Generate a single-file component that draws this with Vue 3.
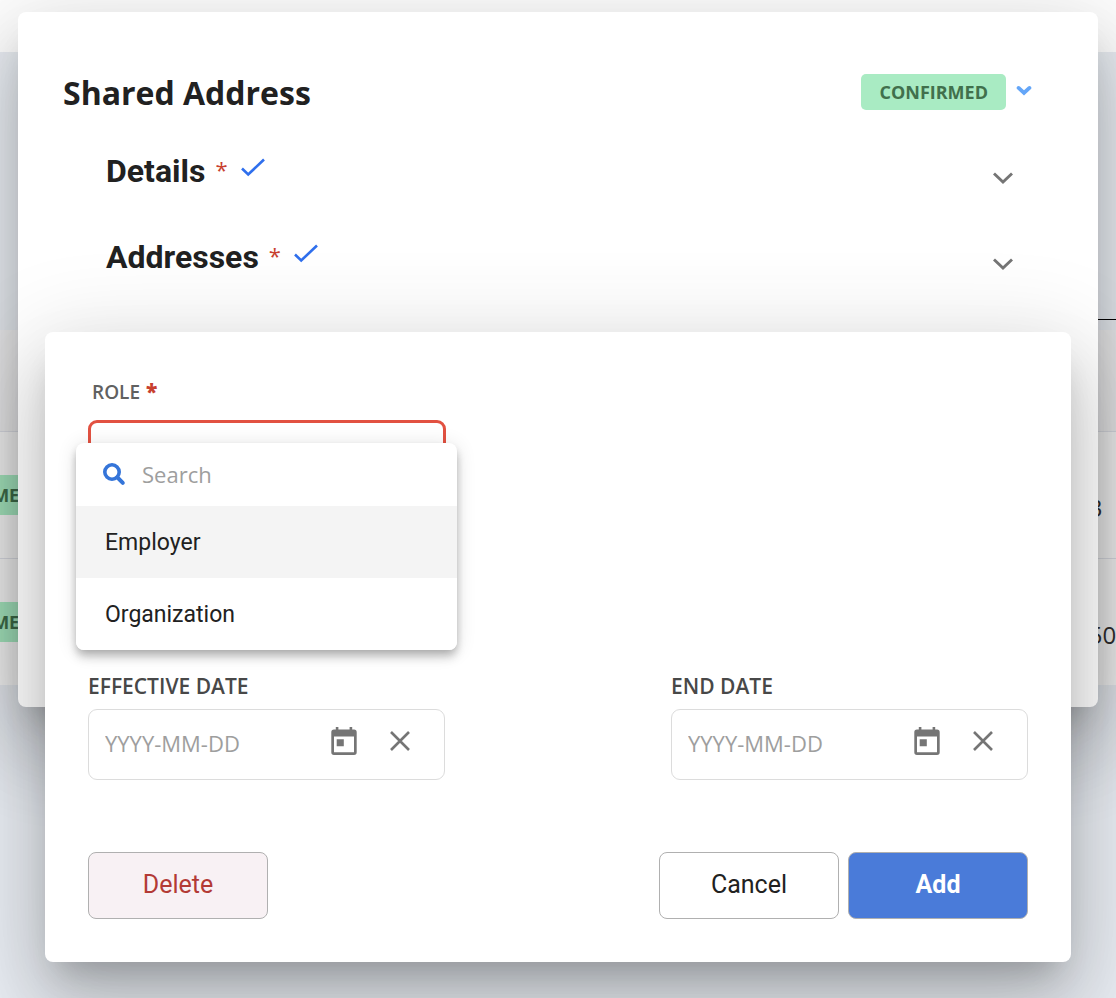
<script setup>
import { ref } from 'vue'

const roles = ['Employer', 'Organization']
const active = ref('Employer')
const search = ref('')
const dates = ref([
  { id: 'effective', label: 'EFFECTIVE DATE', value: '' },
  { id: 'end', label: 'END DATE', value: '' },
])
const sections = [{ title: 'Details' }, { title: 'Addresses' }]
const rows = [
  { status: 'CONFIRMED', value: '13' },
  { status: 'CONFIRMED', value: '250' },
]
</script>

<template>
  <div class="page">
    <header class="topbar"></header>
    <main class="backdrop">
      <div class="rule"></div>
      <table class="records">
        <thead>
          <tr><th></th><th></th></tr>
        </thead>
        <tbody>
          <tr v-for="row in rows" :key="row.value">
            <td><span class="tag">{{ row.status }}</span></td>
            <td class="amount">{{ row.value }}</td>
          </tr>
        </tbody>
      </table>
    </main>

    <section class="dialog parent" aria-label="Shared Address">
      <div class="titlebar">
        <h1>Shared Address</h1>
        <div class="status">
          <span class="badge">CONFIRMED</span>
          <button class="icon-btn" aria-label="Change status">
            <svg width="16" height="16" viewBox="0 0 16 16"><path d="M2.6 3.9 8 9 13.4 3.9" fill="none" stroke="#64a6f8" stroke-width="3.8" stroke-linecap="round" /></svg>
          </button>
        </div>
      </div>
      <div v-for="s in sections" :key="s.title" class="section">
        <h2>{{ s.title }}</h2>
        <span class="star">*</span>
        <svg class="check" width="26" height="20" viewBox="0 0 26 20"><path d="M2 11.5 8.2 17.5 24 2.5" fill="none" stroke="#2f6fed" stroke-width="2.6" /></svg>
        <button class="icon-btn expand" :aria-label="'Expand ' + s.title">
          <svg width="22" height="14" viewBox="0 0 22 14"><path d="M2 2.5 11 11 20 2.5" fill="none" stroke="#757575" stroke-width="2.9" /></svg>
        </button>
      </div>
    </section>

    <section class="dialog child" aria-label="Add role">
      <div class="role">
        <label id="role-label" for="role">ROLE <b>*</b></label>
        <button id="role" class="select" aria-haspopup="listbox" aria-labelledby="role-label"></button>
        <div class="panel">
          <label class="search">
            <svg width="24" height="24" viewBox="0 0 24 24" aria-hidden="true"><circle cx="10" cy="10" r="7.2" fill="none" stroke="#3575d9" stroke-width="3.6" /><path d="M15.5 15.5 20.8 20.8" stroke="#3575d9" stroke-width="4" stroke-linecap="round" /></svg>
            <input v-model="search" type="text" placeholder="Search" aria-label="Search" />
          </label>
          <button v-for="r in roles" :key="r" class="option" :class="{ active: r === active }" @click="active = r">{{ r }}</button>
        </div>
      </div>

      <div class="dates">
        <div v-for="d in dates" :key="d.id" class="field">
          <label :for="d.id">{{ d.label }}</label>
          <div class="box">
            <input :id="d.id" v-model="d.value" type="text" placeholder="YYYY-MM-DD" />
            <button class="icon-btn" aria-label="Open calendar">
              <svg width="28" height="30" viewBox="0 0 28 30"><path fill="#757575" fill-rule="evenodd" d="M4 3.5H5.8V1H8.4V3.5H19.6V1H22.2V3.5H24A2.7 2.7 0 0 1 26.7 6.2V26.3A2.7 2.7 0 0 1 24 29H4A2.7 2.7 0 0 1 1.3 26.3V6.2A2.7 2.7 0 0 1 4 3.5ZM4 10.4V26.3H24V10.4ZM6.7 13.3H13.8V20.3H6.7Z" /></svg>
            </button>
            <button class="icon-btn" aria-label="Clear date" @click="d.value = ''">
              <svg width="20" height="20" viewBox="0 0 20 20"><path d="M1 1 19 19M19 1 1 19" fill="none" stroke="#757575" stroke-width="2.6" /></svg>
            </button>
          </div>
        </div>
      </div>

      <div class="actions">
        <button class="btn delete">Delete</button>
        <button class="btn">Cancel</button>
        <button class="btn primary">Add</button>
      </div>
    </section>
  </div>
</template>

<style>
body { margin: 0; }
</style>

<style scoped>
* { box-sizing: border-box; }
.page {
  position: relative;
  min-height: 100vh;
  overflow: hidden;
  background: #e9edf3;
  color: #212121;
  font-family: "Open Sans", "Noto Sans", sans-serif;
}
button, input { font: inherit; color: inherit; }
svg { display: block; }
.topbar { height: 52px; background: #fff; }
.backdrop { padding-top: 267px; }
.rule { height: 1px; margin: 0 0 10px 50%; background: #000; }
.records {
  width: calc(100% + 210px);
  margin-left: -110px;
  border-collapse: collapse;
  background: #f9f9f9;
}
.records th { height: 101px; background: #f0f0f2; }
.records td { height: 127px; padding: 0 16px; border-top: 1px solid #dfe1e8; }
.tag {
  display: inline-block;
  padding: 0 18px;
  line-height: 40px;
  background: #a9ebc3;
  color: #41704c;
  font-size: 18px;
  font-weight: 700;
}
.records .amount { width: 141px; padding: 26px 0 0; color: #333; font-size: 24px; }

.dialog {
  position: absolute;
  background: #fff;
  border-radius: 8px;
  box-shadow: 0 22px 30px -14px rgba(0, 0, 0, .2), 0 48px 76px 6px rgba(0, 0, 0, .14), 0 18px 92px 16px rgba(0, 0, 0, .12);
}
.parent { top: 12px; left: 18px; right: 18px; padding: 54px 66px 407px 45px; }
.titlebar { display: flex; justify-content: space-between; align-items: center; height: 54px; margin-bottom: 8px; }
h1, h2 { margin: 0; font-weight: 700; }
h1 { font-size: 32px; line-height: 48px; }
h2 { font-family: Roboto, sans-serif; font-size: 32px; line-height: 40px; }
.status { display: flex; align-items: center; gap: 10px; margin-bottom: 2px; }
.badge {
  padding: 0 18px;
  line-height: 36px;
  border-radius: 5px;
  background: #a9ebc3;
  color: #41704c;
  font-size: 18px;
  font-weight: 700;
}
.icon-btn { padding: 0; border: 0; background: none; }
.section { display: flex; align-items: center; height: 86px; padding: 0 18px 0 43px; }
.star { margin: 0 12px 4px 10px; color: #c8402f; font-size: 22px; line-height: 30px; }
.check { margin-bottom: 8px; }
.expand { margin-top: 14px; margin-left: auto; }

.child { top: 332px; left: 45px; right: 45px; padding: 44px 43px 43px; }
label { font-size: 19px; line-height: 32px; font-weight: 600; }
.role { position: relative; height: 294px; }
.role > label { display: block; padding-left: 4px; color: #616161; }
.role b { margin-left: 1px; color: #c8402f; font-size: 21px; line-height: 1; }
.select {
  display: block;
  width: 358px;
  height: 70px;
  margin-top: 12px;
  border: 3px solid #e25141;
  border-radius: 9px;
  background: #fff;
}
.panel {
  position: absolute;
  top: 67px;
  left: -12px;
  width: 381px;
  overflow: hidden;
  border-radius: 8px;
  background: #fff;
  box-shadow: 0 4px 8px -2px rgba(0, 0, 0, .2), 0 8px 10px 0 rgba(0, 0, 0, .14), 0 2px 20px 0 rgba(0, 0, 0, .12);
}
.search { display: flex; align-items: center; gap: 16px; height: 63px; padding: 0 26px 2px; }
.search input, .box input { min-width: 0; flex: 1; padding: 0; border: 0; outline: 0; background: none; font-size: 22px; font-weight: 400; }
input::placeholder { color: #9e9e9e; opacity: 1; }
.option {
  display: block;
  width: 100%;
  height: 72px;
  padding: 0 29px;
  border: 0;
  background: #fff;
  font-family: Roboto, sans-serif;
  font-size: 23px;
  text-align: left;
}
.option.active { background: #f4f4f4; }
.dates { display: flex; justify-content: space-between; }
.field { width: 357px; }
.field label { display: block; margin-bottom: 7px; font-size: 21px; color: #484848; }
.box { display: flex; align-items: center; height: 71px; padding: 0 34px 8px 16px; border: 1px solid #dcdcdc; border-radius: 9px; }
.box input { padding-top: 4px; }
.box .icon-btn + .icon-btn { margin-left: 32px; }
.actions { display: flex; gap: 9px; margin-top: 72px; }
.btn {
  width: 180px;
  height: 67px;
  padding: 0 0 2px;
  border: 1px solid #b0b0b0;
  border-radius: 8px;
  background: #fff;
  font-family: Roboto, sans-serif;
  font-size: 25px;
}
.delete { margin-right: auto; background: #f8f1f4; color: #b33a35; }
.primary { background: #4a7bd9; color: #fff; font-weight: 700; }
</style>
